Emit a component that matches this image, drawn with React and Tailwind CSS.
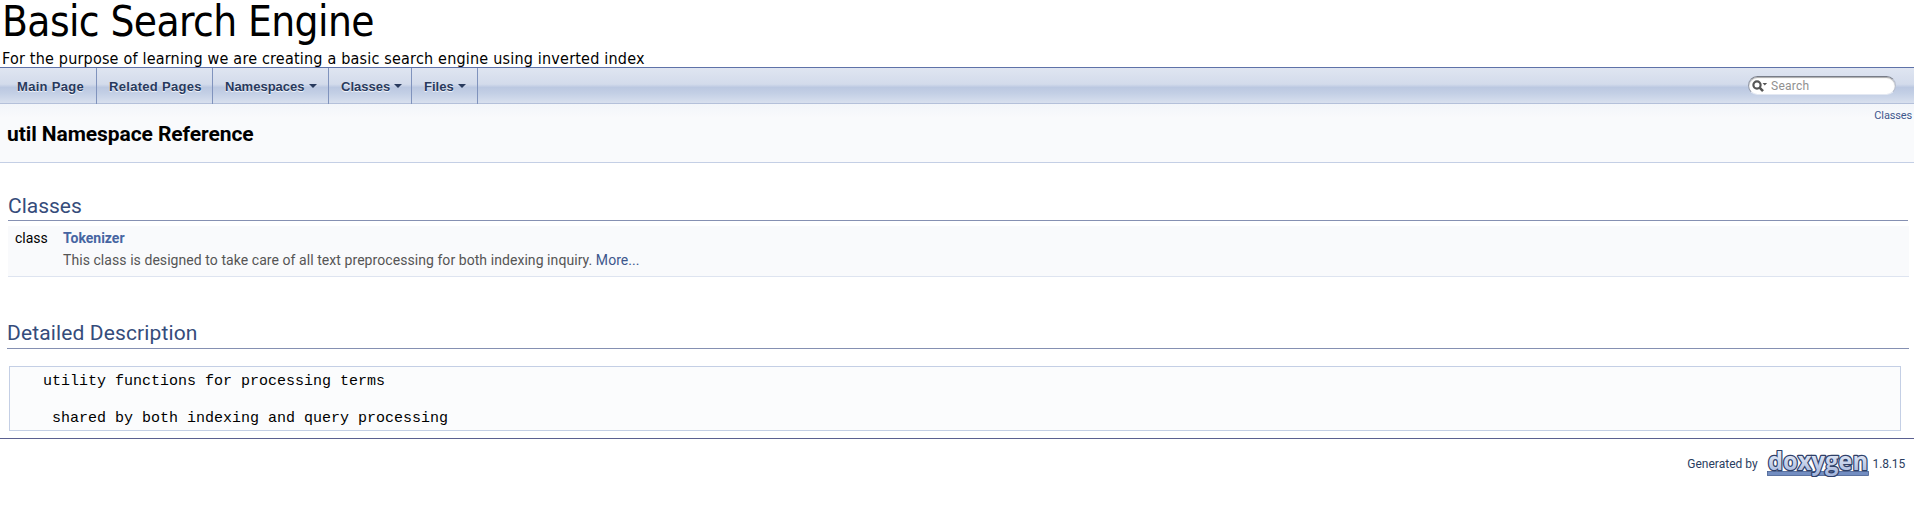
import React from "react";

const tabs = [
  { label: "Main Page", cls: "w-[97px] pl-[17px]" },
  { label: "Related Pages", cls: "w-[116px] pl-[12px]" },
  { label: "Namespaces", cls: "w-[116px] pl-[12px]", menu: true },
  { label: "Classes", cls: "w-[83px] pl-[12px]", menu: true },
  { label: "Files", cls: "w-[66px] pl-[12px]", menu: true },
];

function Navigation() {
  return (
    <nav className="flex h-[37px] shrink-0 items-stretch justify-between border-t border-[#5e72a8] bg-[linear-gradient(to_bottom,#dfe5f1_0%,#d3dbeb_45%,#bbc8e1_54%,#c3cfe5_70%,#d7dfee_96%,#b4c0da_98%)]">
      <ul className="flex">
        {tabs.map((t) => (
          <li
            key={t.label}
            className={`flex items-center border-r border-[#8093bd] font-['Liberation_Sans',sans-serif] text-[13px] font-bold whitespace-nowrap text-[#283a5d] [text-shadow:0_1px_1px_rgba(255,255,255,0.9)] ${t.cls}`}
          >
            <span className={t.menu ? "pt-px" : "pt-px tracking-[0.3px]"}>{t.label}</span>
            {t.menu && (
              <span className="ml-[4px] border-x-4 border-t-4 border-x-transparent border-t-[#283a5d]" />
            )}
          </li>
        ))}
      </ul>
      <div className="mt-[8px] mr-[18px] flex h-[19px] w-[148px] items-center rounded-full border border-t-[#777c88] border-r-[#b5bccb] border-b-[#e3e8f2] border-l-[#9298a5] bg-white pl-[3px] shadow-[inset_0_1px_1px_#aaa]">
        <svg width="17" height="14" viewBox="0 0 17 14" className="shrink-0">
          <circle cx="5" cy="6" r="3.6" fill="none" stroke="#555" strokeWidth="2.2" />
          <path d="M7.6 8.7 L11 12.1" stroke="#555" strokeWidth="2.6" />
          <path d="M10.5 4h4.6l-2.3 2.5z" fill="#555" />
        </svg>
        <span className="ml-[2px] font-['Roboto',sans-serif] text-[12px] tracking-[0.25px] text-[#909090]">Search</span>
      </div>
    </nav>
  );
}

function Logo() {
  return (
    <svg width="104" height="27" viewBox="0 0 104 27" className="ml-[8px] shrink-0">
      <defs>
        <linearGradient id="letters" x1="0" y1="0" x2="0" y2="1">
          <stop offset="0.2" stopColor="#eef2fa" />
          <stop offset="1" stopColor="#9fb2da" />
        </linearGradient>
      </defs>
      <rect x="1.5" y="21.5" width="101" height="4" fill="#728dc1" stroke="#465f92" strokeWidth="0.8" />
      <text
        x="2"
        y="19.5"
        textLength="100"
        lengthAdjust="spacingAndGlyphs"
        fontFamily="Open Sans, sans-serif"
        fontWeight="bold"
        fontSize="25"
        fill="url(#letters)"
        stroke="#2f4068"
        strokeWidth="2.6"
        strokeLinejoin="round"
        paintOrder="stroke"
      >
        doxygen
      </text>
    </svg>
  );
}

export default function App() {
  return (
    <div className="flex h-[528px] w-full flex-col overflow-hidden bg-white font-['Roboto',sans-serif] text-black">
      <header className="h-[67px] shrink-0 pt-px pl-[2px] font-['DejaVu_Sans_Condensed','DejaVu_Sans',sans-serif] [font-stretch:condensed]">
        <h1 className="h-[46px] text-[42px] leading-[42px] tracking-[-0.6px] whitespace-nowrap">Basic Search Engine</h1>
        <p className="text-[16px] leading-[24px] tracking-[0.2px] whitespace-nowrap">
          For the purpose of learning we are creating a basic search engine using inverted index
        </p>
      </header>
      <Navigation />
      <section className="flex h-[59px] shrink-0 justify-between border-b border-[#c4cfe5] bg-[linear-gradient(to_bottom,#f2f5fa_0,#f9fafc_14px)] pr-[2px] pl-[7px]">
        <h2 className="pt-[18px] text-[21px] leading-[24px] font-bold tracking-[-0.08px]">util Namespace Reference</h2>
        <a className="pt-[5px] text-[11px] leading-[13px] tracking-[-0.15px] text-[#3d578c]">Classes</a>
      </section>
      <main className="h-[275px] shrink-0 pl-[8px]">
        <h3 className="mr-[6px] h-[58px] border-b border-[#8590b2] pt-[31px] text-[21px] leading-[25px] text-[#354c7b]">Classes</h3>
        <div className="mt-[5px] mr-[5px] flex h-[51px] border-b border-[#dee4f0] bg-[#f9fafc] text-[14px] leading-[16px]">
          <span className="w-[55px] pt-[4px] pl-[7px]">class</span>
          <div className="pt-[4px]">
            <a className="block font-bold text-[#4665a2]">Tokenizer</a>
            <p className="pt-[6px] tracking-[0.063px] text-[#555]">
              This class is designed to take care of all text preprocessing for both indexing inquiry.{" "}
              <a className="text-[#3d578c]">More...</a>
            </p>
          </div>
        </div>
        <h3 className="mr-[5px] -ml-px h-[72px] border-b border-[#8590b2] pt-[44px] text-[21px] leading-[25px] tracking-[0.13px] text-[#354c7b]">Detailed Description</h3>
        <pre className="mt-[17px] mr-[13px] ml-px h-[65px] border border-[#c4cfe5] bg-[#fbfcfd] pt-[6px] pl-[33px] font-['Liberation_Mono',monospace] text-[15px] leading-[18.5px]">
          {"utility functions for processing terms\n\n shared by both indexing and query processing"}
        </pre>
      </main>
      <footer className="flex h-[50px] shrink-0 items-center justify-end border-t border-[#5b6090] pr-[9px] text-[12px] text-[#2a3d61]">
        <span>Generated by</span>
        <Logo />
        <span className="ml-[3px] tracking-[-0.15px]">1.8.15</span>
      </footer>
    </div>
  );
}
